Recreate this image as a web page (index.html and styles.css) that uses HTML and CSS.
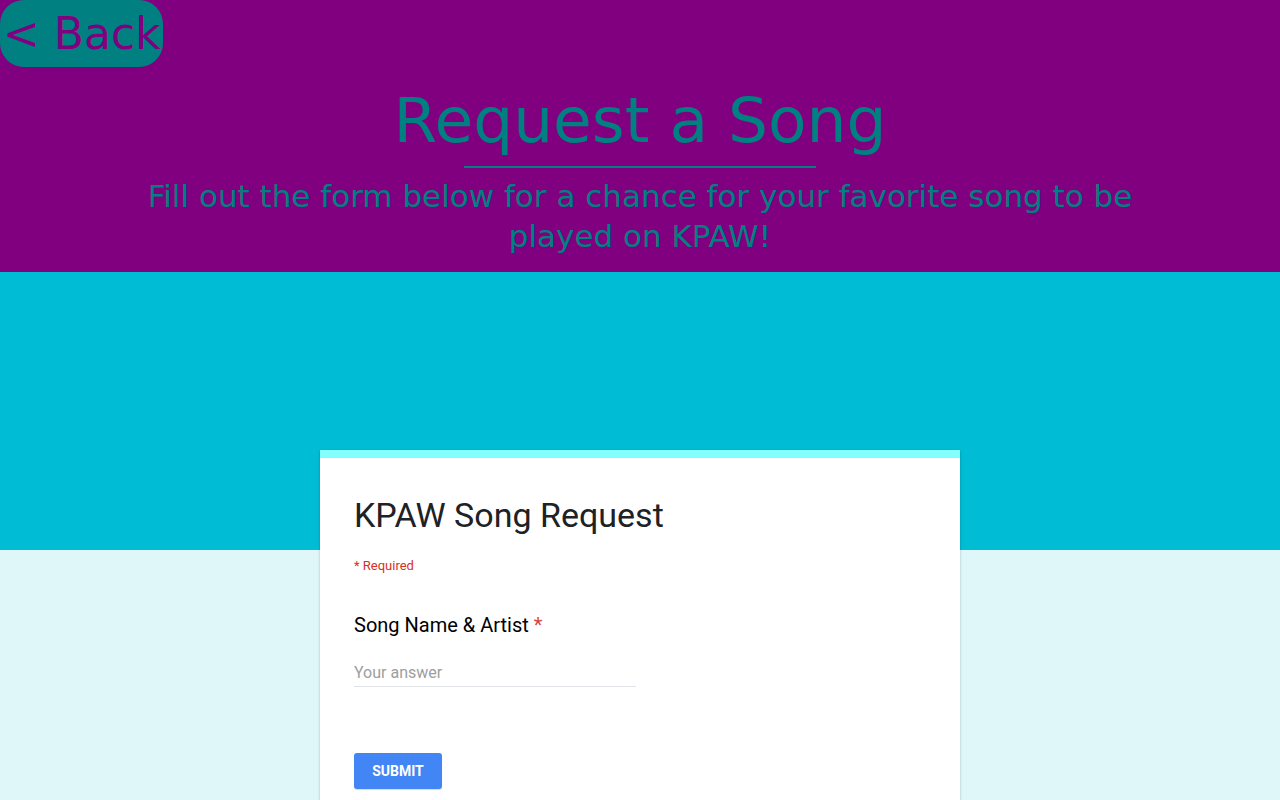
FILE: index.html
```html
<!DOCTYPE html>
<html lang="en">
<head>
<meta charset="utf-8">
<title>Request a Song</title>
<link rel="stylesheet" href="styles.css">
</head>
<body>
<header class="hero">
  <a class="back" href="#">&lt; Back</a>
  <h1 class="hero-title">Request a Song</h1>
  <hr class="hero-rule">
  <p class="hero-sub">Fill out the form below for a chance for your favorite song to be played on KPAW!</p>
</header>
<section class="form-area">
  <div class="card">
    <h2 class="card-title">KPAW Song Request</h2>
    <div class="required">* Required</div>
    <div class="question">Song Name &amp; Artist <span class="star">*</span></div>
    <div class="answer">Your answer</div>
    <button class="submit" type="button">SUBMIT</button>
  </div>
</section>
</body>
</html>
```
FILE: styles.css
```css
html, body {
  margin: 0;
  padding: 0;
}
body {
  font-family: "DejaVu Sans", sans-serif;
  background: #e0f7fa;
  height: 800px;
  overflow: hidden;
}
.hero {
  background: #800080;
  color: #008080;
  height: 272px;
  box-sizing: border-box;
  display: flex;
  flex-direction: column;
  align-items: center;
}
.back {
  align-self: flex-start;
  display: block;
  background: #008080;
  color: #800080;
  text-decoration: none;
  font-size: 44px;
  line-height: 67px;
  height: 67px;
  width: 163px;
  box-sizing: border-box;
  padding-left: 3px;
  border-radius: 24px;
  white-space: nowrap;
}
.hero-title {
  margin: 18px 0 0;
  font-weight: normal;
  font-size: 63px;
  line-height: 72px;
  text-align: center;
}
.hero-rule {
  width: 352px;
  height: 2px;
  border: 0;
  background: #008080;
  margin: 9px 0 0;
}
.hero-sub {
  margin: 8px 0 0;
  width: 1000px;
  font-size: 31px;
  line-height: 40px;
  text-align: center;
}
.form-area {
  background: linear-gradient(#00bcd4 0, #00bcd4 278px, #e0f7fa 278px);
  padding-top: 178px;
  height: 528px;
  box-sizing: border-box;
  overflow: hidden;
}
.card {
  width: 640px;
  margin: 0 auto;
  background: #fff;
  border-top: 8px solid #84ffff;
  box-sizing: border-box;
  padding: 37px 34px 0;
  height: 360px;
  box-shadow: 0 2px 1px -1px rgba(0,0,0,.2), 0 1px 1px 0 rgba(0,0,0,.14), 0 1px 3px 0 rgba(0,0,0,.16);
  font-family: Roboto, "Liberation Sans", sans-serif;
}
.card-title {
  margin: 0;
  font-weight: normal;
  font-size: 34px;
  line-height: 40px;
  color: #202124;
}
.required {
  margin-top: 21px;
  font-size: 13px;
  line-height: 20px;
  color: #d93025;
}
.question {
  margin-top: 37px;
  font-size: 20px;
  line-height: 24px;
  color: #000;
}
.star {
  color: #db4437;
}
.answer {
  margin-top: 24px;
  width: 282px;
  font-size: 16px;
  line-height: 24px;
  padding-bottom: 1px;
  color: #9e9e9e;
  border-bottom: 1px solid #e0e4e8;
}
.submit {
  display: block;
  margin-top: 66px;
  width: 88px;
  height: 36px;
  border: 0;
  border-radius: 3px;
  background: #4285f4;
  color: #fff;
  font-family: Roboto, "Liberation Sans", sans-serif;
  font-weight: bold;
  font-size: 14px;
  padding: 0;
  box-shadow: 0 1px 1px rgba(0,0,0,.15);
}
```
